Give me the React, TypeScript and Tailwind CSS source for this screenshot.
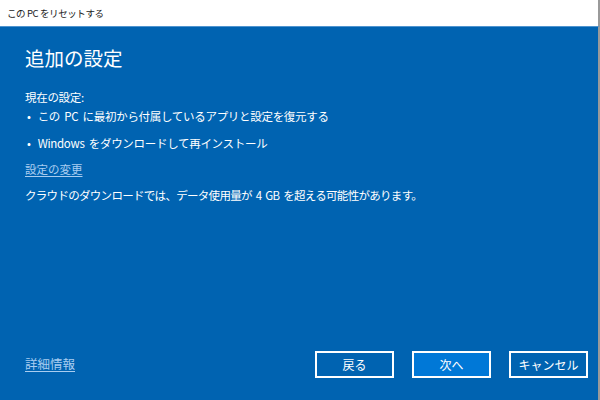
const jp = { fontFamily: '"Noto Sans CJK JP", "Noto Sans", sans-serif' };

const Btn = ({ label, primary }: { label: string; primary?: boolean }) => (
    <button
        className={
            "w-[79px] h-[27px] border-2 border-white text-white text-[12px] leading-none " +
            (primary ? "bg-[#0078d7]" : "bg-[#0063b1]")
        }
    >
        {label}
    </button>
);

export default function App() {
    return (
        <div className="w-[600px] h-[400px] flex flex-col bg-white overflow-hidden" style={jp}>
            {/* title bar */}
            <div className="h-[26px] flex items-center px-[7px] text-[9.5px] tracking-[-0.4px] text-[#1a1a1a] border-r-2 border-[#9a9a9a] shrink-0">
                この PC をリセットする
            </div>

            <div className="flex-1 flex flex-col bg-[#0063b1] border-t border-[#4f94cf] border-r-2 border-r-[#9a9a9a] text-white pl-[25px] pr-[10px]">
                <h1 className="text-[19.5px] leading-[28px] mt-[17px]">追加の設定</h1>

                <p className="text-[11.5px] leading-[20px] mt-[15px] tracking-[-0.3px]">現在の設定:</p>
                <ul className="text-[11.5px] leading-[18px] tracking-[-0.3px] [word-spacing:2px]">
                    <li className="flex gap-[7px]">
                        <span className="pl-[2px]">•</span>
                        <span>この PC に最初から付属しているアプリと設定を復元する</span>
                    </li>
                    <li className="flex gap-[7px] mt-[9px]">
                        <span className="pl-[2px]">•</span>
                        <span>Windows をダウンロードして再インストール</span>
                    </li>
                </ul>
                <a className="text-[11.5px] leading-[18px] mt-[8px] text-[#a9cdf0] underline underline-offset-2 w-fit">
                    設定の変更
                </a>
                <p className="text-[11.5px] leading-[18px] mt-[8px] tracking-[-0.7px] [word-spacing:2px]">
                    クラウドのダウンロードでは、データ使用量が 4 GB を超える可能性があります。
                </p>

                <div className="mt-auto mb-[22px] flex items-center justify-between">
                    <a className="text-[12.5px] text-[#a9cdf0] underline underline-offset-2">詳細情報</a>
                    <div className="flex gap-[18px]">
                        <Btn label="戻る" />
                        <Btn label="次へ" primary />
                        <Btn label="キャンセル" />
                    </div>
                </div>
            </div>
        </div>
    );
}
